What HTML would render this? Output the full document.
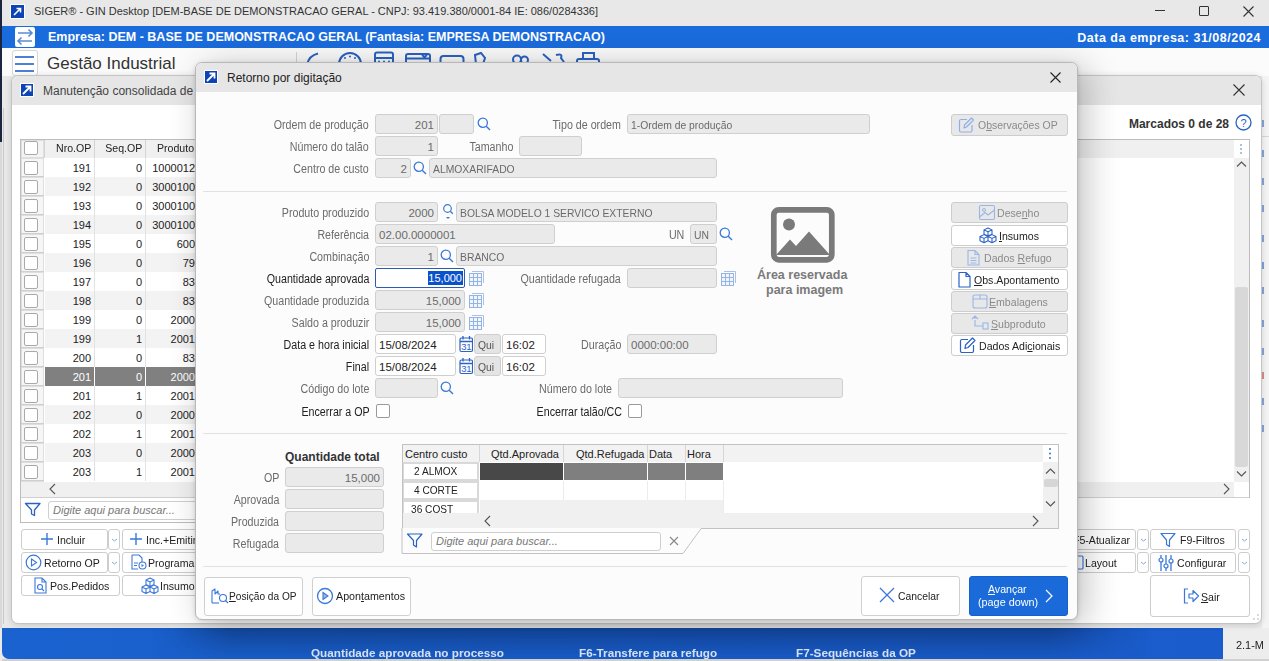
<!DOCTYPE html>
<html><head><meta charset="utf-8"><style>
*{box-sizing:border-box;margin:0;padding:0}
html,body{width:1269px;height:661px;overflow:hidden;background:#e9e9e9;font-family:"Liberation Sans",sans-serif;font-size:11px;color:#222}
.a{position:absolute}
.t{position:absolute;white-space:nowrap;line-height:13px}
.inp{position:absolute;background:#eaeaea;border:1px solid #cfcfcf;border-radius:3px;font-size:11px;color:#6a6a6a;line-height:18px;padding:0 4px;white-space:nowrap;overflow:hidden}
.btn{position:absolute;background:#fff;border:1px solid #cdcdcd;border-radius:3px;white-space:nowrap;overflow:hidden}
.dis{background:#e8e8e8;color:#8a8a8a}
u{text-decoration:underline;text-underline-offset:1px}
</style></head><body>
<div class="a" style="left:0px;top:0px;width:1269px;height:661px;background:#e9e9e9"></div>
<div class="a" style="left:0px;top:0px;width:2px;height:142px;background:#1b2540"></div>
<div class="a" style="left:0px;top:142px;width:2px;height:486px;background:#d9d9d9"></div>
<div class="a" style="left:2px;top:0px;width:1267px;height:26px;background:#e8e8e8"></div>
<div class="a" style="left:10px;top:4px;width:15px;height:15px;background:#0c45b3;border:1px solid #fff"></div>
<svg class="a" style="left:10px;top:4px;" width="15" height="15" viewBox="0 0 15 15"><path d="M4 11 L10.5 4.5 M6.5 4.5 H10.5 V8.5" stroke="#fff" stroke-width="1.6" fill="none"/></svg>
<div class="t" style="left:34px;top:5px;font-size:11px;color:#333;font-weight:normal;">SIGER® - GIN Desktop [DEM-BASE DE DEMONSTRACAO GERAL - CNPJ: 93.419.380/0001-84 IE: 086/0284336]</div>
<div class="a" style="left:1155px;top:10px;width:10px;height:1px;background:#333"></div>
<div class="a" style="left:1199px;top:6px;width:10px;height:10px;border:1px solid #333;border-radius:1px"></div>
<svg class="a" style="left:1243px;top:6px;" width="11" height="11" viewBox="0 0 11 11"><path d="M0.5 0.5 L10.5 10.5 M10.5 0.5 L0.5 10.5" stroke="#333" stroke-width="1.1"/></svg>
<div class="a" style="left:2px;top:26px;width:1267px;height:22px;background:#1a6bdc"></div>
<div class="a" style="left:15px;top:27px;width:20px;height:20px;background:#fff;border-radius:2px"></div>
<svg class="a" style="left:15px;top:27px;" width="20" height="20" viewBox="0 0 20 20"><path d="M3 6 H17 M13.5 2.5 L17 6 L13.5 9.5 M17 14 H3 M6.5 10.5 L3 14 L6.5 17.5" stroke="#5b8ad8" stroke-width="1.6" fill="none"/></svg>
<div class="t" style="left:48px;top:31px;font-size:12.5px;color:#fff;font-weight:bold;">Empresa: DEM - BASE DE DEMONSTRACAO GERAL (Fantasia: EMPRESA DEMONSTRACAO)</div>
<div class="t" style="right:8px;top:32px;font-size:12.5px;color:#fff;font-weight:bold;letter-spacing:0.5px">Data da empresa: 31/08/2024</div>
<div class="a" style="left:2px;top:48px;width:1267px;height:28px;background:#fbfbfb"></div>
<div class="a" style="left:12px;top:50px;width:26px;height:26px;background:#fff;border:1px solid #d6d6d6;border-radius:3px"></div>
<div class="a" style="left:15px;top:56px;width:19px;height:2px;background:#4f80d4"></div>
<div class="a" style="left:15px;top:63px;width:19px;height:2px;background:#4f80d4"></div>
<div class="a" style="left:15px;top:70px;width:19px;height:2px;background:#4f80d4"></div>
<div class="t" style="left:47px;top:55px;font-size:17px;color:#333;font-weight:normal;line-height:18px">Gestão Industrial</div>
<div class="a" style="left:296px;top:52px;width:1px;height:10px;background:#d6d6d6"></div>
<svg class="a" style="left:300px;top:48px;" width="320" height="16" viewBox="0 0 320 16"><path d="M18 5.5 Q8 8 7 18" style="stroke:#2a63c4;stroke-width:2;fill:none"/><circle cx="50" cy="16" r="11" style="stroke:#2a63c4;stroke-width:2;fill:none"/><circle cx="45" cy="10" r="1" fill="#2a63c4"/><circle cx="50" cy="8.5" r="1" fill="#2a63c4"/><circle cx="55" cy="10" r="1" fill="#2a63c4"/><rect x="75" y="4.5" width="18" height="16" rx="2" style="stroke:#2a63c4;stroke-width:2;fill:none"/><path d="M76 10 H92" style="stroke:#2a63c4;stroke-width:2;fill:none"/><circle cx="79" cy="13.5" r="1" fill="#2a63c4"/><circle cx="84" cy="13.5" r="1" fill="#2a63c4"/><circle cx="89" cy="13.5" r="1" fill="#2a63c4"/><rect x="106" y="6" width="24" height="14" rx="2" style="stroke:#2a63c4;stroke-width:2;fill:none"/><path d="M107 10.5 H129 M122 7 L124.5 9 L127 7" style="stroke:#2a63c4;stroke-width:2;fill:none"/><rect x="140.5" y="8" width="23" height="12" rx="3" style="stroke:#2a63c4;stroke-width:2;fill:none"/><path d="M176 16 L175 7 L181 5 L185 10 L183 16" style="stroke:#2a63c4;stroke-width:2;fill:none"/><circle cx="217" cy="11.5" r="4" style="stroke:#2a63c4;stroke-width:2;fill:none"/><circle cx="224.5" cy="12" r="3.5" style="stroke:#2a63c4;stroke-width:2;fill:none"/><path d="M243 6 L251 13 M256 7 Q263 5 261 10 L264 14" style="stroke:#2a63c4;stroke-width:2;fill:none"/><rect x="277" y="11" width="22" height="10" rx="2" style="stroke:#2a63c4;stroke-width:2;fill:none"/><rect x="283" y="5" width="11" height="6" style="stroke:#2a63c4;stroke-width:2;fill:none"/></svg>
<div class="a" style="left:1262px;top:76px;width:7px;height:552px;background:#f4f4f4"></div>
<div class="a" style="left:1262px;top:120px;width:2px;height:7px;background:#2a63c4;opacity:.55"></div>
<div class="a" style="left:1262px;top:150px;width:2px;height:7px;background:#2a63c4;opacity:.55"></div>
<div class="a" style="left:1262px;top:178px;width:2px;height:7px;background:#2a63c4;opacity:.55"></div>
<div class="a" style="left:1262px;top:205px;width:2px;height:7px;background:#2a63c4;opacity:.55"></div>
<div class="a" style="left:1262px;top:235px;width:2px;height:7px;background:#2a63c4;opacity:.55"></div>
<div class="a" style="left:1262px;top:262px;width:2px;height:7px;background:#1a5fd0;opacity:.55"></div>
<div class="a" style="left:1262px;top:287px;width:2px;height:7px;background:#2a63c4;opacity:.55"></div>
<div class="a" style="left:1262px;top:320px;width:2px;height:7px;background:#2a63c4;opacity:.55"></div>
<div class="a" style="left:1262px;top:348px;width:2px;height:7px;background:#2a63c4;opacity:.55"></div>
<div class="a" style="left:1262px;top:372px;width:2px;height:7px;background:#c0392b;opacity:.55"></div>
<div class="a" style="left:1262px;top:398px;width:2px;height:7px;background:#2a63c4;opacity:.55"></div>
<div class="a" style="left:1262px;top:425px;width:2px;height:7px;background:#2a63c4;opacity:.55"></div>
<div class="a" style="left:2px;top:628px;width:1221px;height:31px;background:linear-gradient(90deg,#1a62cf 0%,#1a5fcc 40%,#1a5ccb 100%);border-bottom-left-radius:7px"></div>
<div class="a" style="left:150px;top:628px;width:1000px;height:31px;background:linear-gradient(180deg,rgba(0,10,40,.26),rgba(0,10,40,.04));-webkit-mask-image:linear-gradient(90deg,transparent,#000 80px,#000 900px,transparent)"></div>
<div class="a" style="left:1223px;top:628px;width:46px;height:33px;background:#ededed"></div>
<div class="t" style="left:1236px;top:639px;font-size:11.5px;color:#222;font-weight:normal;transform:scaleX(0.95);transform-origin:0 0;">2.1-M</div>
<div class="a" style="left:2px;top:659px;width:1267px;height:2px;background:#d0d0d0"></div>
<div class="t" style="left:311px;top:647px;font-size:11.5px;color:#d6e2f4;font-weight:bold;transform:scaleX(1.02);transform-origin:0 0;">Quantidade aprovada no processo</div>
<div class="t" style="left:579px;top:647px;font-size:11.5px;color:#d6e2f4;font-weight:bold;transform:scaleX(1.02);transform-origin:0 0;">F6-Transfere para refugo</div>
<div class="t" style="left:796px;top:647px;font-size:11.5px;color:#d6e2f4;font-weight:bold;transform:scaleX(1.02);transform-origin:0 0;">F7-Sequências da OP</div>
<div class="a" style="left:3px;top:108px;width:1px;height:516px;background:#c8c8c8"></div>
<div class="a" style="left:1262px;top:136px;width:7px;height:1px;background:#d6d6d6"></div>
<div class="a" style="left:11px;top:75px;width:1251px;height:549px;background:#fff;border:1px solid #c4c4c4;border-radius:7px;box-shadow:0 1px 6px rgba(0,0,0,.15);overflow:hidden">
<div class="a" style="left:0;top:0;width:1251px;height:29px;background:#e6e6e6"></div>
</div>
<div class="a" style="left:20px;top:83px;width:14px;height:14px;background:#0c45b3;border:1px solid #fff"></div>
<svg class="a" style="left:20px;top:83px;" width="14" height="14" viewBox="0 0 14 14"><path d="M3 11 L10.5 3.5 M5.5 3.5 H10.5 V8.5" stroke="#fff" stroke-width="1.8" fill="none"/></svg>
<div class="t" style="left:43px;top:85px;font-size:12px;color:#444;font-weight:normal;">Manutenção consolidada de OPs</div>
<svg class="a" style="left:1233px;top:84px;" width="12" height="12" viewBox="0 0 12 12"><path d="M0.5 0.5 L11.5 11.5 M11.5 0.5 L0.5 11.5" stroke="#333" stroke-width="1.1"/></svg>
<div class="t" style="right:40px;top:118px;font-size:12px;color:#333;font-weight:bold;">Marcados 0 de 28</div>
<svg class="a" style="left:1235px;top:114px;" width="17" height="17" viewBox="0 0 17 17"><circle cx="8.5" cy="8.5" r="7.5" stroke="#2a63c4" stroke-width="1.3" fill="none"/><text x="8.5" y="12.5" text-anchor="middle" font-family="Liberation Sans" font-size="11" fill="#2a63c4">?</text></svg>
<div class="a" style="left:20px;top:139px;width:1230px;height:359px;border:1px solid #bdbdbd;background:#fff"></div>
<div class="a" style="left:20px;top:497px;width:1px;height:26px;background:#bdbdbd"></div>
<div class="a" style="left:20px;top:522px;width:180px;height:1px;background:#bdbdbd"></div>
<div class="a" style="left:21px;top:140px;width:1213px;height:18px;background:#f0f0f0"></div>
<div class="a" style="left:21px;top:140px;width:23px;height:342px;background:#dedede"></div>
<div class="a" style="left:22px;top:141px;width:21px;height:16px;background:#f3f3f3"></div>
<div class="a" style="left:24px;top:141px;width:14px;height:14px;background:#fff;border:1px solid #aaa;border-radius:2px"></div>
<div class="a" style="left:44px;top:140px;width:1px;height:18px;background:#d4d4d4"></div>
<div class="a" style="left:94px;top:140px;width:1px;height:18px;background:#d4d4d4"></div>
<div class="a" style="left:145px;top:140px;width:1px;height:18px;background:#d4d4d4"></div>
<div class="t" style="right:1178px;top:142px;font-size:11.5px;color:#222;font-weight:normal;transform:scaleX(0.92);transform-origin:100% 0;">Nro.OP</div>
<div class="t" style="right:1127px;top:142px;font-size:11.5px;color:#222;font-weight:normal;transform:scaleX(0.92);transform-origin:100% 0;">Seq.OP</div>
<div class="t" style="left:157px;top:142px;font-size:11.5px;color:#222;font-weight:normal;transform:scaleX(0.92);transform-origin:0 0;">Produto</div>
<div class="a" style="left:45px;top:158px;width:955px;height:19px;background:#fff"></div>
<div class="a" style="left:22px;top:159px;width:21px;height:17px;background:#f6f6f6"></div>
<div class="a" style="left:24px;top:161px;width:14px;height:14px;background:#fff;border:1px solid #a9a9a9;border-radius:2px"></div>
<div class="a" style="left:94px;top:158px;width:1px;height:19px;background:#e2e2e2"></div>
<div class="a" style="left:145px;top:158px;width:1px;height:19px;background:#e2e2e2"></div>
<div class="t" style="right:1178px;top:162px;font-size:11px;color:#222;font-weight:normal;">191</div>
<div class="t" style="right:1127px;top:162px;font-size:11px;color:#222;font-weight:normal;">0</div>
<div class="t" style="right:1074px;top:162px;font-size:11px;color:#222;font-weight:normal;">1000012</div>
<div class="a" style="left:21px;top:176px;width:23px;height:1px;background:#cfcfcf"></div>
<div class="a" style="left:45px;top:177px;width:955px;height:19px;background:#f3f3f3"></div>
<div class="a" style="left:22px;top:178px;width:21px;height:17px;background:#f6f6f6"></div>
<div class="a" style="left:24px;top:180px;width:14px;height:14px;background:#fff;border:1px solid #a9a9a9;border-radius:2px"></div>
<div class="a" style="left:94px;top:177px;width:1px;height:19px;background:#e2e2e2"></div>
<div class="a" style="left:145px;top:177px;width:1px;height:19px;background:#e2e2e2"></div>
<div class="t" style="right:1178px;top:181px;font-size:11px;color:#222;font-weight:normal;">192</div>
<div class="t" style="right:1127px;top:181px;font-size:11px;color:#222;font-weight:normal;">0</div>
<div class="t" style="right:1074px;top:181px;font-size:11px;color:#222;font-weight:normal;">3000100</div>
<div class="a" style="left:21px;top:195px;width:23px;height:1px;background:#cfcfcf"></div>
<div class="a" style="left:45px;top:196px;width:955px;height:19px;background:#fff"></div>
<div class="a" style="left:22px;top:197px;width:21px;height:17px;background:#f6f6f6"></div>
<div class="a" style="left:24px;top:199px;width:14px;height:14px;background:#fff;border:1px solid #a9a9a9;border-radius:2px"></div>
<div class="a" style="left:94px;top:196px;width:1px;height:19px;background:#e2e2e2"></div>
<div class="a" style="left:145px;top:196px;width:1px;height:19px;background:#e2e2e2"></div>
<div class="t" style="right:1178px;top:200px;font-size:11px;color:#222;font-weight:normal;">193</div>
<div class="t" style="right:1127px;top:200px;font-size:11px;color:#222;font-weight:normal;">0</div>
<div class="t" style="right:1074px;top:200px;font-size:11px;color:#222;font-weight:normal;">3000100</div>
<div class="a" style="left:21px;top:214px;width:23px;height:1px;background:#cfcfcf"></div>
<div class="a" style="left:45px;top:215px;width:955px;height:19px;background:#f3f3f3"></div>
<div class="a" style="left:22px;top:216px;width:21px;height:17px;background:#f6f6f6"></div>
<div class="a" style="left:24px;top:218px;width:14px;height:14px;background:#fff;border:1px solid #a9a9a9;border-radius:2px"></div>
<div class="a" style="left:94px;top:215px;width:1px;height:19px;background:#e2e2e2"></div>
<div class="a" style="left:145px;top:215px;width:1px;height:19px;background:#e2e2e2"></div>
<div class="t" style="right:1178px;top:219px;font-size:11px;color:#222;font-weight:normal;">194</div>
<div class="t" style="right:1127px;top:219px;font-size:11px;color:#222;font-weight:normal;">0</div>
<div class="t" style="right:1074px;top:219px;font-size:11px;color:#222;font-weight:normal;">3000100</div>
<div class="a" style="left:21px;top:233px;width:23px;height:1px;background:#cfcfcf"></div>
<div class="a" style="left:45px;top:234px;width:955px;height:19px;background:#fff"></div>
<div class="a" style="left:22px;top:235px;width:21px;height:17px;background:#f6f6f6"></div>
<div class="a" style="left:24px;top:237px;width:14px;height:14px;background:#fff;border:1px solid #a9a9a9;border-radius:2px"></div>
<div class="a" style="left:94px;top:234px;width:1px;height:19px;background:#e2e2e2"></div>
<div class="a" style="left:145px;top:234px;width:1px;height:19px;background:#e2e2e2"></div>
<div class="t" style="right:1178px;top:238px;font-size:11px;color:#222;font-weight:normal;">195</div>
<div class="t" style="right:1127px;top:238px;font-size:11px;color:#222;font-weight:normal;">0</div>
<div class="t" style="right:1074px;top:238px;font-size:11px;color:#222;font-weight:normal;">600</div>
<div class="a" style="left:21px;top:252px;width:23px;height:1px;background:#cfcfcf"></div>
<div class="a" style="left:45px;top:253px;width:955px;height:19px;background:#f3f3f3"></div>
<div class="a" style="left:22px;top:254px;width:21px;height:17px;background:#f6f6f6"></div>
<div class="a" style="left:24px;top:256px;width:14px;height:14px;background:#fff;border:1px solid #a9a9a9;border-radius:2px"></div>
<div class="a" style="left:94px;top:253px;width:1px;height:19px;background:#e2e2e2"></div>
<div class="a" style="left:145px;top:253px;width:1px;height:19px;background:#e2e2e2"></div>
<div class="t" style="right:1178px;top:257px;font-size:11px;color:#222;font-weight:normal;">196</div>
<div class="t" style="right:1127px;top:257px;font-size:11px;color:#222;font-weight:normal;">0</div>
<div class="t" style="right:1074px;top:257px;font-size:11px;color:#222;font-weight:normal;">79</div>
<div class="a" style="left:21px;top:271px;width:23px;height:1px;background:#cfcfcf"></div>
<div class="a" style="left:45px;top:272px;width:955px;height:19px;background:#fff"></div>
<div class="a" style="left:22px;top:273px;width:21px;height:17px;background:#f6f6f6"></div>
<div class="a" style="left:24px;top:275px;width:14px;height:14px;background:#fff;border:1px solid #a9a9a9;border-radius:2px"></div>
<div class="a" style="left:94px;top:272px;width:1px;height:19px;background:#e2e2e2"></div>
<div class="a" style="left:145px;top:272px;width:1px;height:19px;background:#e2e2e2"></div>
<div class="t" style="right:1178px;top:276px;font-size:11px;color:#222;font-weight:normal;">197</div>
<div class="t" style="right:1127px;top:276px;font-size:11px;color:#222;font-weight:normal;">0</div>
<div class="t" style="right:1074px;top:276px;font-size:11px;color:#222;font-weight:normal;">83</div>
<div class="a" style="left:21px;top:290px;width:23px;height:1px;background:#cfcfcf"></div>
<div class="a" style="left:45px;top:291px;width:955px;height:19px;background:#f3f3f3"></div>
<div class="a" style="left:22px;top:292px;width:21px;height:17px;background:#f6f6f6"></div>
<div class="a" style="left:24px;top:294px;width:14px;height:14px;background:#fff;border:1px solid #a9a9a9;border-radius:2px"></div>
<div class="a" style="left:94px;top:291px;width:1px;height:19px;background:#e2e2e2"></div>
<div class="a" style="left:145px;top:291px;width:1px;height:19px;background:#e2e2e2"></div>
<div class="t" style="right:1178px;top:295px;font-size:11px;color:#222;font-weight:normal;">198</div>
<div class="t" style="right:1127px;top:295px;font-size:11px;color:#222;font-weight:normal;">0</div>
<div class="t" style="right:1074px;top:295px;font-size:11px;color:#222;font-weight:normal;">83</div>
<div class="a" style="left:21px;top:309px;width:23px;height:1px;background:#cfcfcf"></div>
<div class="a" style="left:45px;top:310px;width:955px;height:19px;background:#fff"></div>
<div class="a" style="left:22px;top:311px;width:21px;height:17px;background:#f6f6f6"></div>
<div class="a" style="left:24px;top:313px;width:14px;height:14px;background:#fff;border:1px solid #a9a9a9;border-radius:2px"></div>
<div class="a" style="left:94px;top:310px;width:1px;height:19px;background:#e2e2e2"></div>
<div class="a" style="left:145px;top:310px;width:1px;height:19px;background:#e2e2e2"></div>
<div class="t" style="right:1178px;top:314px;font-size:11px;color:#222;font-weight:normal;">199</div>
<div class="t" style="right:1127px;top:314px;font-size:11px;color:#222;font-weight:normal;">0</div>
<div class="t" style="right:1074px;top:314px;font-size:11px;color:#222;font-weight:normal;">2000</div>
<div class="a" style="left:21px;top:328px;width:23px;height:1px;background:#cfcfcf"></div>
<div class="a" style="left:45px;top:329px;width:955px;height:19px;background:#f3f3f3"></div>
<div class="a" style="left:22px;top:330px;width:21px;height:17px;background:#f6f6f6"></div>
<div class="a" style="left:24px;top:332px;width:14px;height:14px;background:#fff;border:1px solid #a9a9a9;border-radius:2px"></div>
<div class="a" style="left:94px;top:329px;width:1px;height:19px;background:#e2e2e2"></div>
<div class="a" style="left:145px;top:329px;width:1px;height:19px;background:#e2e2e2"></div>
<div class="t" style="right:1178px;top:333px;font-size:11px;color:#222;font-weight:normal;">199</div>
<div class="t" style="right:1127px;top:333px;font-size:11px;color:#222;font-weight:normal;">1</div>
<div class="t" style="right:1074px;top:333px;font-size:11px;color:#222;font-weight:normal;">2001</div>
<div class="a" style="left:21px;top:347px;width:23px;height:1px;background:#cfcfcf"></div>
<div class="a" style="left:45px;top:348px;width:955px;height:19px;background:#fff"></div>
<div class="a" style="left:22px;top:349px;width:21px;height:17px;background:#f6f6f6"></div>
<div class="a" style="left:24px;top:351px;width:14px;height:14px;background:#fff;border:1px solid #a9a9a9;border-radius:2px"></div>
<div class="a" style="left:94px;top:348px;width:1px;height:19px;background:#e2e2e2"></div>
<div class="a" style="left:145px;top:348px;width:1px;height:19px;background:#e2e2e2"></div>
<div class="t" style="right:1178px;top:352px;font-size:11px;color:#222;font-weight:normal;">200</div>
<div class="t" style="right:1127px;top:352px;font-size:11px;color:#222;font-weight:normal;">0</div>
<div class="t" style="right:1074px;top:352px;font-size:11px;color:#222;font-weight:normal;">83</div>
<div class="a" style="left:21px;top:366px;width:23px;height:1px;background:#cfcfcf"></div>
<div class="a" style="left:45px;top:367px;width:955px;height:19px;background:#808080"></div>
<div class="a" style="left:22px;top:368px;width:21px;height:17px;background:#f6f6f6"></div>
<div class="a" style="left:24px;top:370px;width:14px;height:14px;background:#fff;border:1px solid #a9a9a9;border-radius:2px"></div>
<div class="a" style="left:94px;top:367px;width:1px;height:19px;background:#fff"></div>
<div class="a" style="left:145px;top:367px;width:1px;height:19px;background:#fff"></div>
<div class="t" style="right:1178px;top:371px;font-size:11px;color:#fff;font-weight:normal;">201</div>
<div class="t" style="right:1127px;top:371px;font-size:11px;color:#fff;font-weight:normal;">0</div>
<div class="t" style="right:1074px;top:371px;font-size:11px;color:#fff;font-weight:normal;">2000</div>
<div class="a" style="left:21px;top:385px;width:23px;height:1px;background:#cfcfcf"></div>
<div class="a" style="left:45px;top:386px;width:955px;height:19px;background:#fff"></div>
<div class="a" style="left:22px;top:387px;width:21px;height:17px;background:#f6f6f6"></div>
<div class="a" style="left:24px;top:389px;width:14px;height:14px;background:#fff;border:1px solid #a9a9a9;border-radius:2px"></div>
<div class="a" style="left:94px;top:386px;width:1px;height:19px;background:#e2e2e2"></div>
<div class="a" style="left:145px;top:386px;width:1px;height:19px;background:#e2e2e2"></div>
<div class="t" style="right:1178px;top:390px;font-size:11px;color:#222;font-weight:normal;">201</div>
<div class="t" style="right:1127px;top:390px;font-size:11px;color:#222;font-weight:normal;">1</div>
<div class="t" style="right:1074px;top:390px;font-size:11px;color:#222;font-weight:normal;">2001</div>
<div class="a" style="left:21px;top:404px;width:23px;height:1px;background:#cfcfcf"></div>
<div class="a" style="left:45px;top:405px;width:955px;height:19px;background:#f3f3f3"></div>
<div class="a" style="left:22px;top:406px;width:21px;height:17px;background:#f6f6f6"></div>
<div class="a" style="left:24px;top:408px;width:14px;height:14px;background:#fff;border:1px solid #a9a9a9;border-radius:2px"></div>
<div class="a" style="left:94px;top:405px;width:1px;height:19px;background:#e2e2e2"></div>
<div class="a" style="left:145px;top:405px;width:1px;height:19px;background:#e2e2e2"></div>
<div class="t" style="right:1178px;top:409px;font-size:11px;color:#222;font-weight:normal;">202</div>
<div class="t" style="right:1127px;top:409px;font-size:11px;color:#222;font-weight:normal;">0</div>
<div class="t" style="right:1074px;top:409px;font-size:11px;color:#222;font-weight:normal;">2000</div>
<div class="a" style="left:21px;top:423px;width:23px;height:1px;background:#cfcfcf"></div>
<div class="a" style="left:45px;top:424px;width:955px;height:19px;background:#fff"></div>
<div class="a" style="left:22px;top:425px;width:21px;height:17px;background:#f6f6f6"></div>
<div class="a" style="left:24px;top:427px;width:14px;height:14px;background:#fff;border:1px solid #a9a9a9;border-radius:2px"></div>
<div class="a" style="left:94px;top:424px;width:1px;height:19px;background:#e2e2e2"></div>
<div class="a" style="left:145px;top:424px;width:1px;height:19px;background:#e2e2e2"></div>
<div class="t" style="right:1178px;top:428px;font-size:11px;color:#222;font-weight:normal;">202</div>
<div class="t" style="right:1127px;top:428px;font-size:11px;color:#222;font-weight:normal;">1</div>
<div class="t" style="right:1074px;top:428px;font-size:11px;color:#222;font-weight:normal;">2001</div>
<div class="a" style="left:21px;top:442px;width:23px;height:1px;background:#cfcfcf"></div>
<div class="a" style="left:45px;top:443px;width:955px;height:19px;background:#f3f3f3"></div>
<div class="a" style="left:22px;top:444px;width:21px;height:17px;background:#f6f6f6"></div>
<div class="a" style="left:24px;top:446px;width:14px;height:14px;background:#fff;border:1px solid #a9a9a9;border-radius:2px"></div>
<div class="a" style="left:94px;top:443px;width:1px;height:19px;background:#e2e2e2"></div>
<div class="a" style="left:145px;top:443px;width:1px;height:19px;background:#e2e2e2"></div>
<div class="t" style="right:1178px;top:447px;font-size:11px;color:#222;font-weight:normal;">203</div>
<div class="t" style="right:1127px;top:447px;font-size:11px;color:#222;font-weight:normal;">0</div>
<div class="t" style="right:1074px;top:447px;font-size:11px;color:#222;font-weight:normal;">2000</div>
<div class="a" style="left:21px;top:461px;width:23px;height:1px;background:#cfcfcf"></div>
<div class="a" style="left:45px;top:462px;width:955px;height:19px;background:#fff"></div>
<div class="a" style="left:22px;top:463px;width:21px;height:17px;background:#f6f6f6"></div>
<div class="a" style="left:24px;top:465px;width:14px;height:14px;background:#fff;border:1px solid #a9a9a9;border-radius:2px"></div>
<div class="a" style="left:94px;top:462px;width:1px;height:19px;background:#e2e2e2"></div>
<div class="a" style="left:145px;top:462px;width:1px;height:19px;background:#e2e2e2"></div>
<div class="t" style="right:1178px;top:466px;font-size:11px;color:#222;font-weight:normal;">203</div>
<div class="t" style="right:1127px;top:466px;font-size:11px;color:#222;font-weight:normal;">1</div>
<div class="t" style="right:1074px;top:466px;font-size:11px;color:#222;font-weight:normal;">2001</div>
<div class="a" style="left:21px;top:480px;width:23px;height:1px;background:#cfcfcf"></div>
<div class="a" style="left:21px;top:482px;width:1213px;height:15px;background:#f0f0f0"></div>
<svg class="a" style="left:48px;top:483px;" width="10" height="12" viewBox="0 0 10 12"><path d="M7 1 L2 6 L7 11" stroke="#555" stroke-width="1.1" fill="none"/></svg>
<svg class="a" style="left:1221px;top:483px;" width="10" height="12" viewBox="0 0 10 12"><path d="M3 1 L8 6 L3 11" stroke="#555" stroke-width="1.1" fill="none"/></svg>
<div class="a" style="left:1234px;top:140px;width:15px;height:342px;background:#f0f0f0"></div>
<div class="a" style="left:1234px;top:140px;width:15px;height:18px;background:#fff"></div>
<svg class="a" style="left:1236px;top:143px;" width="10" height="14" viewBox="0 0 10 14"><circle cx="5" cy="2" r=".8" fill="#4a70b8"/><circle cx="5" cy="6" r=".8" fill="#4a70b8"/><circle cx="5" cy="10" r=".8" fill="#4a70b8"/></svg>
<svg class="a" style="left:1236px;top:160px;" width="11" height="8" viewBox="0 0 11 8"><path d="M1 6.5 L5.5 2 L10 6.5" stroke="#555" stroke-width="1.1" fill="none"/></svg>
<div class="a" style="left:1235px;top:287px;width:13px;height:180px;background:#d8d8d8;border-radius:2px"></div>
<svg class="a" style="left:1236px;top:470px;" width="11" height="8" viewBox="0 0 11 8"><path d="M1 1.5 L5.5 6 L10 1.5" stroke="#555" stroke-width="1.1" fill="none"/></svg>
<div class="a" style="left:21px;top:497px;width:1228px;height:1px;background:#d0d0d0"></div>
<svg class="a" style="left:24px;top:502px;" width="18" height="15" viewBox="0 0 18 15"><path d="M1.5 1.5 H16 L10.5 8 V13.5 L7.5 12 V8 Z" stroke="#2a63c4" stroke-width="1.3" fill="none" stroke-linejoin="round"/></svg>
<div class="a" style="left:48px;top:501px;width:400px;height:19px;background:#fff;border:1px solid #cfcfcf;border-radius:3px"></div>
<div class="t" style="left:53px;top:504px;font-size:11px;color:#777;font-weight:normal;font-style:italic">Digite aqui para buscar...</div>
<div class="btn" style="left:21px;top:529px;width:87px;height:21px;background:#fff"></div>
<div class="t" style="left:57px;top:534px;font-size:11.5px;color:#222;font-weight:normal;transform:scaleX(0.92);transform-origin:0 0;">Incluir</div>
<svg class="a" style="left:40px;top:532px;" width="14" height="14" viewBox="0 0 14 14"><path d="M7 1 V13 M1 7 H13" stroke="#3b78d8" stroke-width="1.4"/></svg>
<div class="btn" style="left:108px;top:529px;width:12px;height:21px"></div>
<svg class="a" style="left:111px;top:538px;" width="7" height="5" viewBox="0 0 7 5"><path d="M1 1 L3.5 3 L6 1" stroke="#8aa5d0" stroke-width="1" fill="none"/></svg>
<div class="btn" style="left:122px;top:529px;width:200px;height:21px;background:#fff"></div>
<div class="t" style="left:146px;top:534px;font-size:11.5px;color:#222;font-weight:normal;transform:scaleX(0.92);transform-origin:0 0;">Inc.+Emitir</div>
<svg class="a" style="left:129px;top:532px;" width="14" height="14" viewBox="0 0 14 14"><path d="M7 1 V13 M1 7 H13" stroke="#3b78d8" stroke-width="1.4"/></svg>
<div class="btn" style="left:21px;top:552px;width:87px;height:21px;background:#fff"></div>
<div class="t" style="left:44px;top:557px;font-size:11.5px;color:#222;font-weight:normal;transform:scaleX(0.92);transform-origin:0 0;">Retorno OP</div>
<svg class="a" style="left:25px;top:554px;" width="17" height="17" viewBox="0 0 17 17"><circle cx="8.5" cy="8.5" r="7.3" stroke="#3b78d8" stroke-width="1.2" fill="none"/><path d="M6.5 5 L11.5 8.5 L6.5 12 Z" stroke="#3b78d8" stroke-width="1.1" fill="none"/></svg>
<div class="btn" style="left:108px;top:552px;width:12px;height:21px"></div>
<svg class="a" style="left:111px;top:561px;" width="7" height="5" viewBox="0 0 7 5"><path d="M1 1 L3.5 3 L6 1" stroke="#8aa5d0" stroke-width="1" fill="none"/></svg>
<div class="btn" style="left:122px;top:552px;width:200px;height:21px;background:#fff"></div>
<div class="t" style="left:148px;top:557px;font-size:11.5px;color:#222;font-weight:normal;transform:scaleX(0.92);transform-origin:0 0;">Programar</div>
<svg class="a" style="left:130px;top:554px;" width="17" height="16" viewBox="0 0 17 16"><path d="M2 1 H9 L12 4 V8 M2 1 V15 H8" stroke="#3b78d8" stroke-width="1.1" fill="none"/><path d="M4 9 H8 M4 11.5 H7" stroke="#3b78d8" stroke-width="1"/><circle cx="12.5" cy="11.5" r="3.5" stroke="#3b78d8" stroke-width="1.1" fill="none"/><path d="M11.5 10 L14 11.5 L11.5 13 Z" fill="#3b78d8"/></svg>
<div class="btn" style="left:21px;top:575px;width:99px;height:21px;background:#fff"></div>
<div class="t" style="left:50px;top:580px;font-size:11.5px;color:#222;font-weight:normal;transform:scaleX(0.92);transform-origin:0 0;">Pos.Pedidos</div>
<svg class="a" style="left:33px;top:577px;" width="15" height="17" viewBox="0 0 15 17"><path d="M2 1 H9 L13 5 V16 H2 Z M9 1 V5 H13" stroke="#3b78d8" stroke-width="1.1" fill="none"/><circle cx="7" cy="10" r="2.5" stroke="#3b78d8" stroke-width="1.1" fill="none"/><path d="M9 12 L11 14" stroke="#3b78d8" stroke-width="1.1"/></svg>
<div class="btn" style="left:122px;top:575px;width:200px;height:21px;background:#fff"></div>
<div class="t" style="left:160px;top:580px;font-size:11.5px;color:#222;font-weight:normal;transform:scaleX(0.92);transform-origin:0 0;">Insumos</div>
<svg class="a" style="left:141px;top:577px;" width="18" height="18" viewBox="0 0 18 18"><path d="M9 1 L13 3 V7.5 L9 9.5 L5 7.5 V3 Z M5 3 L9 5 L13 3 M9 5 V9.5 M5 8 L9 10 V14.5 L5 16.5 L1 14.5 V10 Z M1 10 L5 12 L9 10 M5 12 V16.5 M13 8 L17 10 V14.5 L13 16.5 L9 14.5 V10 Z M9 10 L13 12 L17 10 M13 12 V16.5" stroke="#3b78d8" stroke-width="1.1" fill="none" stroke-linejoin="round"/></svg>
<div class="btn" style="left:1000px;top:529px;width:136px;height:21px;background:#fff"></div>
<div class="t" style="left:1073px;top:534px;font-size:11.5px;color:#222;font-weight:normal;transform:scaleX(0.92);transform-origin:0 0;">F5-Atualizar</div>
<div class="btn" style="left:1137px;top:529px;width:12px;height:21px"></div>
<svg class="a" style="left:1140px;top:538px;" width="7" height="5" viewBox="0 0 7 5"><path d="M1 1 L3.5 3 L6 1" stroke="#8aa5d0" stroke-width="1" fill="none"/></svg>
<div class="btn" style="left:1150px;top:529px;width:86px;height:21px;background:#fff"></div>
<div class="t" style="left:1180px;top:534px;font-size:11.5px;color:#222;font-weight:normal;transform:scaleX(0.92);transform-origin:0 0;">F9-Filtros</div>
<svg class="a" style="left:1160px;top:532px;" width="16" height="16" viewBox="0 0 16 16"><path d="M1 1.5 H15 L9.5 8 V14.5 L6.5 12.5 V8 Z" stroke="#3b78d8" stroke-width="1.2" fill="none" stroke-linejoin="round"/></svg>
<div class="btn" style="left:1238px;top:529px;width:12px;height:21px"></div>
<svg class="a" style="left:1241px;top:538px;" width="7" height="5" viewBox="0 0 7 5"><path d="M1 1 L3.5 3 L6 1" stroke="#8aa5d0" stroke-width="1" fill="none"/></svg>
<div class="btn" style="left:1000px;top:552px;width:136px;height:21px;background:#fff"></div>
<div class="t" style="left:1085px;top:557px;font-size:11.5px;color:#222;font-weight:normal;transform:scaleX(0.92);transform-origin:0 0;">Layout</div>
<svg class="a" style="left:1075px;top:555px;" width="9" height="15" viewBox="0 0 9 15"><rect x="1" y="1" width="7" height="13" rx="1" stroke="#3b78d8" stroke-width="1.2" fill="none"/></svg>
<div class="btn" style="left:1137px;top:552px;width:12px;height:21px"></div>
<svg class="a" style="left:1140px;top:561px;" width="7" height="5" viewBox="0 0 7 5"><path d="M1 1 L3.5 3 L6 1" stroke="#8aa5d0" stroke-width="1" fill="none"/></svg>
<div class="btn" style="left:1150px;top:552px;width:86px;height:21px;background:#fff"></div>
<div class="t" style="left:1177px;top:557px;font-size:11.5px;color:#222;font-weight:normal;transform:scaleX(0.92);transform-origin:0 0;">Configurar</div>
<svg class="a" style="left:1158px;top:554px;" width="16" height="18" viewBox="0 0 16 18"><path d="M3 1 V17 M8 1 V17 M13 1 V17" stroke="#3b78d8" stroke-width="1.3"/><circle cx="3" cy="6" r="2" fill="#fff" stroke="#3b78d8" stroke-width="1.2"/><circle cx="8" cy="12" r="2" fill="#fff" stroke="#3b78d8" stroke-width="1.2"/><circle cx="13" cy="7" r="2" fill="#fff" stroke="#3b78d8" stroke-width="1.2"/></svg>
<div class="btn" style="left:1238px;top:552px;width:12px;height:21px"></div>
<svg class="a" style="left:1241px;top:561px;" width="7" height="5" viewBox="0 0 7 5"><path d="M1 1 L3.5 3 L6 1" stroke="#8aa5d0" stroke-width="1" fill="none"/></svg>
<div class="btn" style="left:1150px;top:575px;width:100px;height:42px;background:#fff"></div>
<div class="t" style="left:1201px;top:591px;font-size:11.5px;color:#222;font-weight:normal;transform:scaleX(0.92);transform-origin:0 0;"><u>S</u>air</div>
<svg class="a" style="left:1182px;top:587px;" width="18" height="18" viewBox="0 0 18 18"><path d="M6 2 H2.5 V16 H6" stroke="#3b78d8" stroke-width="1.2" fill="none"/><path d="M7 7 H11 V3.5 L16.5 9 L11 14.5 V11 H7 Z" stroke="#3b78d8" stroke-width="1.2" fill="none" stroke-linejoin="round"/></svg>
<svg class="a" style="left:1252px;top:613px;" width="8" height="8" viewBox="0 0 8 8"><circle cx="6" cy="2" r=".8" fill="#aaa"/><circle cx="6" cy="6" r=".8" fill="#aaa"/><circle cx="2" cy="6" r=".8" fill="#aaa"/></svg>
<div class="a" style="left:195px;top:62px;width:883px;height:558px;background:#fcfcfc;border:1px solid #b8b8b8;border-radius:7px;box-shadow:8px 5px 34px rgba(0,0,0,.24),0 1px 5px rgba(0,0,0,.14);overflow:hidden">
<div class="a" style="left:0;top:0;width:883px;height:29px;background:#e6e6e6"></div>
</div>
<div class="a" style="left:204px;top:70px;width:14px;height:14px;background:#0c45b3;border:1px solid #fff"></div>
<svg class="a" style="left:204px;top:70px;" width="14" height="14" viewBox="0 0 14 14"><path d="M3 11 L10.5 3.5 M5.5 3.5 H10.5 V8.5" stroke="#fff" stroke-width="1.8" fill="none"/></svg>
<div class="t" style="left:227px;top:72px;font-size:12px;color:#222;font-weight:normal;">Retorno por digitação</div>
<svg class="a" style="left:1050px;top:72px;" width="11" height="11" viewBox="0 0 11 11"><path d="M0.5 0.5 L10.5 10.5 M10.5 0.5 L0.5 10.5" stroke="#222" stroke-width="1.1"/></svg>
<div class="t" style="right:900px;top:119px;font-size:12px;color:#6b6b6b;font-weight:normal;transform:scaleX(0.89);transform-origin:100% 0;">Ordem de produção</div>
<div class="inp" style="left:375px;top:114px;width:63px;height:20px;background:#eaeaea;border-color:#cfcfcf"></div>
<div class="t" style="right:835px;top:119px;font-size:11.5px;color:#6a6a6a;font-weight:normal;">201</div>
<div class="inp" style="left:439px;top:114px;width:35px;height:20px;background:#eaeaea;border-color:#cfcfcf"></div>
<svg class="a" style="left:477px;top:117px;" width="14" height="14" viewBox="0 0 14 14"><circle cx="5.8" cy="5.8" r="4.6" stroke="#3b78d8" stroke-width="1.3" fill="none"/><path d="M9.2 9.2 L13 13" stroke="#3b78d8" stroke-width="1.4"/></svg>
<div class="t" style="right:648px;top:119px;font-size:12px;color:#6b6b6b;font-weight:normal;transform:scaleX(0.89);transform-origin:100% 0;">Tipo de ordem</div>
<div class="inp" style="left:627px;top:114px;width:243px;height:20px;background:#eaeaea;border-color:#cfcfcf"></div>
<div class="t" style="left:631px;top:119px;font-size:11.5px;color:#6a6a6a;font-weight:normal;transform:scaleX(0.9);transform-origin:0 0;">1-Ordem de produção</div>
<div class="t" style="right:900px;top:141px;font-size:12px;color:#6b6b6b;font-weight:normal;transform:scaleX(0.89);transform-origin:100% 0;">Número do talão</div>
<div class="inp" style="left:375px;top:136px;width:63px;height:20px;background:#eaeaea;border-color:#cfcfcf"></div>
<div class="t" style="right:835px;top:141px;font-size:11.5px;color:#6a6a6a;font-weight:normal;">1</div>
<div class="t" style="right:756px;top:141px;font-size:12px;color:#6b6b6b;font-weight:normal;transform:scaleX(0.89);transform-origin:100% 0;">Tamanho</div>
<div class="inp" style="left:519px;top:136px;width:63px;height:20px;background:#eaeaea;border-color:#cfcfcf"></div>
<div class="t" style="right:900px;top:163px;font-size:12px;color:#6b6b6b;font-weight:normal;transform:scaleX(0.89);transform-origin:100% 0;">Centro de custo</div>
<div class="inp" style="left:375px;top:158px;width:36px;height:20px;background:#eaeaea;border-color:#cfcfcf"></div>
<div class="t" style="right:862px;top:163px;font-size:11.5px;color:#6a6a6a;font-weight:normal;">2</div>
<svg class="a" style="left:413px;top:161px;" width="14" height="14" viewBox="0 0 14 14"><circle cx="5.8" cy="5.8" r="4.6" stroke="#3b78d8" stroke-width="1.3" fill="none"/><path d="M9.2 9.2 L13 13" stroke="#3b78d8" stroke-width="1.4"/></svg>
<div class="inp" style="left:429px;top:158px;width:288px;height:20px;background:#eaeaea;border-color:#cfcfcf"></div>
<div class="t" style="left:433px;top:163px;font-size:11.5px;color:#6a6a6a;font-weight:normal;transform:scaleX(0.9);transform-origin:0 0;">ALMOXARIFADO</div>
<div class="btn dis" style="left:951px;top:114px;width:117px;height:22px"></div>
<svg class="a" style="left:958px;top:117px;" width="17" height="16" viewBox="0 0 17 16"><path d="M9 2.5 H3 A1.5 1.5 0 0 0 1.5 4 V13.5 A1.5 1.5 0 0 0 3 15 H12.5 A1.5 1.5 0 0 0 14 13.5 V8" stroke="#8fb0e6" stroke-width="1.2" fill="none"/><path d="M6 11 L6.5 8 L13.5 1 L15.5 3 L8.5 10 Z" stroke="#8fb0e6" stroke-width="1.2" fill="none" stroke-linejoin="round"/></svg>
<div class="t" style="left:978px;top:119px;font-size:11.5px;color:#8a8a8a;font-weight:normal;transform:scaleX(0.91);transform-origin:0 0;">O<u>b</u>servações OP</div>
<div class="a" style="left:203px;top:191px;width:864px;height:1px;background:#e2e2e2"></div>
<div class="t" style="right:900px;top:207px;font-size:12px;color:#6b6b6b;font-weight:normal;transform:scaleX(0.89);transform-origin:100% 0;">Produto produzido</div>
<div class="inp" style="left:375px;top:202px;width:63px;height:20px;background:#eaeaea;border-color:#cfcfcf"></div>
<div class="t" style="right:835px;top:207px;font-size:11.5px;color:#6a6a6a;font-weight:normal;">2000</div>
<svg class="a" style="left:441px;top:203px;" width="14" height="18" viewBox="0 0 14 18"><circle cx="6.5" cy="5.5" r="3.8" stroke="#3b78d8" stroke-width="1.2" fill="none"/><path d="M9.3 8.3 L11.8 10.8" stroke="#3b78d8" stroke-width="1.3"/><path d="M5 14 L7 16 L9 14 Z" fill="#3b78d8"/></svg>
<div class="inp" style="left:456px;top:202px;width:261px;height:20px;background:#eaeaea;border-color:#cfcfcf"></div>
<div class="t" style="left:460px;top:207px;font-size:11.5px;color:#6a6a6a;font-weight:normal;transform:scaleX(0.9);transform-origin:0 0;">BOLSA MODELO 1 SERVICO EXTERNO</div>
<div class="t" style="right:900px;top:229px;font-size:12px;color:#6b6b6b;font-weight:normal;transform:scaleX(0.89);transform-origin:100% 0;">Referência</div>
<div class="inp" style="left:375px;top:224px;width:180px;height:20px;background:#eaeaea;border-color:#cfcfcf"></div>
<div class="t" style="left:379px;top:229px;font-size:11.5px;color:#6a6a6a;font-weight:normal;">02.00.0000001</div>
<div class="t" style="right:585px;top:229px;font-size:12px;color:#6b6b6b;font-weight:normal;transform:scaleX(0.89);transform-origin:100% 0;">UN</div>
<div class="inp" style="left:690px;top:224px;width:27px;height:20px;background:#eaeaea;border-color:#cfcfcf"></div>
<div class="t" style="left:694px;top:229px;font-size:11.5px;color:#6a6a6a;font-weight:normal;transform:scaleX(0.9);transform-origin:0 0;">UN</div>
<svg class="a" style="left:719px;top:227px;" width="14" height="14" viewBox="0 0 14 14"><circle cx="5.8" cy="5.8" r="4.6" stroke="#3b78d8" stroke-width="1.3" fill="none"/><path d="M9.2 9.2 L13 13" stroke="#3b78d8" stroke-width="1.4"/></svg>
<div class="t" style="right:900px;top:251px;font-size:12px;color:#6b6b6b;font-weight:normal;transform:scaleX(0.89);transform-origin:100% 0;">Combinação</div>
<div class="inp" style="left:375px;top:246px;width:63px;height:20px;background:#eaeaea;border-color:#cfcfcf"></div>
<div class="t" style="right:835px;top:251px;font-size:11.5px;color:#6a6a6a;font-weight:normal;">1</div>
<svg class="a" style="left:440px;top:249px;" width="14" height="14" viewBox="0 0 14 14"><circle cx="5.8" cy="5.8" r="4.6" stroke="#3b78d8" stroke-width="1.3" fill="none"/><path d="M9.2 9.2 L13 13" stroke="#3b78d8" stroke-width="1.4"/></svg>
<div class="inp" style="left:456px;top:246px;width:261px;height:20px;background:#eaeaea;border-color:#cfcfcf"></div>
<div class="t" style="left:460px;top:251px;font-size:11.5px;color:#6a6a6a;font-weight:normal;transform:scaleX(0.9);transform-origin:0 0;">BRANCO</div>
<div class="t" style="right:900px;top:273px;font-size:12px;color:#222;font-weight:normal;transform:scaleX(0.89);transform-origin:100% 0;">Quantidade aprovada</div>
<div class="inp" style="left:375px;top:268px;width:90px;height:20px;background:#fff;border:1px solid #2c5bb0;border-radius:2px"></div>
<div class="a" style="left:428px;top:271px;width:35px;height:14px;background:#0a52cc"></div>
<div class="t" style="right:807px;top:272px;font-size:11px;color:#fff;font-weight:normal;">15,000</div>
<svg class="a" style="left:468px;top:270px;" width="17" height="17" viewBox="0 0 17 17"><path d="M4 1.5 H15.5 V13" stroke="#a9c0e8" stroke-width="1" fill="none"/><rect x="1.5" y="3.5" width="12" height="12" fill="#f1f5fc" stroke="#95b3e3" stroke-width="1"/><path d="M1.5 7.5 H13.5 M1.5 11.5 H13.5 M5.5 3.5 V15.5 M9.5 3.5 V15.5" stroke="#95b3e3" stroke-width="1" fill="none"/></svg>
<div class="t" style="right:648px;top:273px;font-size:12px;color:#6b6b6b;font-weight:normal;transform:scaleX(0.89);transform-origin:100% 0;">Quantidade refugada</div>
<div class="inp" style="left:627px;top:268px;width:90px;height:20px;background:#eaeaea;border-color:#cfcfcf"></div>
<svg class="a" style="left:720px;top:270px;" width="17" height="17" viewBox="0 0 17 17"><path d="M4 1.5 H15.5 V13" stroke="#a9c0e8" stroke-width="1" fill="none"/><rect x="1.5" y="3.5" width="12" height="12" fill="#f1f5fc" stroke="#95b3e3" stroke-width="1"/><path d="M1.5 7.5 H13.5 M1.5 11.5 H13.5 M5.5 3.5 V15.5 M9.5 3.5 V15.5" stroke="#95b3e3" stroke-width="1" fill="none"/></svg>
<div class="t" style="right:900px;top:295px;font-size:12px;color:#6b6b6b;font-weight:normal;transform:scaleX(0.89);transform-origin:100% 0;">Quantidade produzida</div>
<div class="inp" style="left:375px;top:290px;width:90px;height:20px;background:#eaeaea;border-color:#cfcfcf"></div>
<div class="t" style="right:808px;top:295px;font-size:11.5px;color:#6a6a6a;font-weight:normal;">15,000</div>
<svg class="a" style="left:468px;top:292px;" width="17" height="17" viewBox="0 0 17 17"><path d="M4 1.5 H15.5 V13" stroke="#a9c0e8" stroke-width="1" fill="none"/><rect x="1.5" y="3.5" width="12" height="12" fill="#f1f5fc" stroke="#95b3e3" stroke-width="1"/><path d="M1.5 7.5 H13.5 M1.5 11.5 H13.5 M5.5 3.5 V15.5 M9.5 3.5 V15.5" stroke="#95b3e3" stroke-width="1" fill="none"/></svg>
<div class="t" style="right:900px;top:317px;font-size:12px;color:#6b6b6b;font-weight:normal;transform:scaleX(0.89);transform-origin:100% 0;">Saldo a produzir</div>
<div class="inp" style="left:375px;top:312px;width:90px;height:20px;background:#eaeaea;border-color:#cfcfcf"></div>
<div class="t" style="right:808px;top:317px;font-size:11.5px;color:#6a6a6a;font-weight:normal;">15,000</div>
<svg class="a" style="left:468px;top:314px;" width="17" height="17" viewBox="0 0 17 17"><path d="M4 1.5 H15.5 V13" stroke="#a9c0e8" stroke-width="1" fill="none"/><rect x="1.5" y="3.5" width="12" height="12" fill="#f1f5fc" stroke="#95b3e3" stroke-width="1"/><path d="M1.5 7.5 H13.5 M1.5 11.5 H13.5 M5.5 3.5 V15.5 M9.5 3.5 V15.5" stroke="#95b3e3" stroke-width="1" fill="none"/></svg>
<div class="t" style="right:900px;top:339px;font-size:12px;color:#222;font-weight:normal;transform:scaleX(0.89);transform-origin:100% 0;">Data e hora inicial</div>
<div class="inp" style="left:375px;top:334px;width:81px;height:20px;background:#fff;border-color:#cfcfcf"></div>
<div class="t" style="left:379px;top:339px;font-size:11.5px;color:#222;font-weight:normal;">15/08/2024</div>
<svg class="a" style="left:459px;top:335px;" width="14" height="18" viewBox="0 0 14 18"><rect x="1" y="3" width="12.5" height="13.5" rx="1.5" stroke="#2a63c4" stroke-width="1.2" fill="#fff"/><path d="M1 6.5 H13.5 M4 1 V4.5 M10.5 1 V4.5" stroke="#2a63c4" stroke-width="1.3"/><text x="7.3" y="15.3" text-anchor="middle" font-family="Liberation Sans" font-size="9.5" fill="#2a63c4" style="letter-spacing:-0.3px">31</text></svg>
<div class="inp" style="left:474px;top:334px;width:27px;height:20px;background:#e4e4e4;border-color:#cfcfcf"></div>
<div class="t" style="left:478px;top:339px;font-size:11.5px;color:#555;font-weight:normal;transform:scaleX(0.9);transform-origin:0 0;">Qui</div>
<div class="inp" style="left:502px;top:334px;width:44px;height:20px;background:#fff;border-color:#cfcfcf"></div>
<div class="t" style="left:506px;top:339px;font-size:11.5px;color:#222;font-weight:normal;">16:02</div>
<div class="t" style="right:900px;top:361px;font-size:12px;color:#222;font-weight:normal;transform:scaleX(0.89);transform-origin:100% 0;">Final</div>
<div class="inp" style="left:375px;top:356px;width:81px;height:20px;background:#fff;border-color:#cfcfcf"></div>
<div class="t" style="left:379px;top:361px;font-size:11.5px;color:#222;font-weight:normal;">15/08/2024</div>
<svg class="a" style="left:459px;top:357px;" width="14" height="18" viewBox="0 0 14 18"><rect x="1" y="3" width="12.5" height="13.5" rx="1.5" stroke="#2a63c4" stroke-width="1.2" fill="#fff"/><path d="M1 6.5 H13.5 M4 1 V4.5 M10.5 1 V4.5" stroke="#2a63c4" stroke-width="1.3"/><text x="7.3" y="15.3" text-anchor="middle" font-family="Liberation Sans" font-size="9.5" fill="#2a63c4" style="letter-spacing:-0.3px">31</text></svg>
<div class="inp" style="left:474px;top:356px;width:27px;height:20px;background:#e4e4e4;border-color:#cfcfcf"></div>
<div class="t" style="left:478px;top:361px;font-size:11.5px;color:#555;font-weight:normal;transform:scaleX(0.9);transform-origin:0 0;">Qui</div>
<div class="inp" style="left:502px;top:356px;width:44px;height:20px;background:#fff;border-color:#cfcfcf"></div>
<div class="t" style="left:506px;top:361px;font-size:11.5px;color:#222;font-weight:normal;">16:02</div>
<div class="t" style="right:648px;top:339px;font-size:12px;color:#6b6b6b;font-weight:normal;transform:scaleX(0.89);transform-origin:100% 0;">Duração</div>
<div class="inp" style="left:627px;top:334px;width:90px;height:20px;background:#eaeaea;border-color:#cfcfcf"></div>
<div class="t" style="left:631px;top:339px;font-size:11.5px;color:#6a6a6a;font-weight:normal;">0000:00:00</div>
<div class="t" style="right:900px;top:383px;font-size:12px;color:#6b6b6b;font-weight:normal;transform:scaleX(0.89);transform-origin:100% 0;">Código do lote</div>
<div class="inp" style="left:375px;top:378px;width:63px;height:20px;background:#eaeaea;border-color:#cfcfcf"></div>
<svg class="a" style="left:440px;top:381px;" width="14" height="14" viewBox="0 0 14 14"><circle cx="5.8" cy="5.8" r="4.6" stroke="#3b78d8" stroke-width="1.3" fill="none"/><path d="M9.2 9.2 L13 13" stroke="#3b78d8" stroke-width="1.4"/></svg>
<div class="t" style="right:657px;top:383px;font-size:12px;color:#6b6b6b;font-weight:normal;transform:scaleX(0.89);transform-origin:100% 0;">Número do lote</div>
<div class="inp" style="left:618px;top:378px;width:225px;height:20px;background:#eaeaea;border-color:#cfcfcf"></div>
<div class="t" style="right:899px;top:406px;font-size:12px;color:#222;font-weight:normal;transform:scaleX(0.89);transform-origin:100% 0;">Encerrar a OP</div>
<div class="a" style="left:376px;top:404px;width:14px;height:14px;background:#fff;border:1px solid #9a9a9a;border-radius:2px"></div>
<div class="t" style="right:647px;top:406px;font-size:12px;color:#222;font-weight:normal;transform:scaleX(0.89);transform-origin:100% 0;">Encerrar talão/CC</div>
<div class="a" style="left:628px;top:404px;width:14px;height:14px;background:#fff;border:1px solid #9a9a9a;border-radius:2px"></div>
<svg class="a" style="left:768px;top:204px;" width="70" height="62" viewBox="0 0 70 62"><rect x="5.8" y="5.8" width="58" height="50" rx="5" stroke="#7a7a7a" stroke-width="5.7" fill="none"/><circle cx="21" cy="20.5" r="6" fill="#7a7a7a"/><path d="M8 51 L22 35.5 L28 42 L41 27.5 L62 51 Z" fill="#7a7a7a"/></svg>
<div class="t" style="left:757px;top:269px;font-size:12.5px;color:#7a7a7a;font-weight:bold;">Área reservada</div>
<div class="t" style="left:766px;top:284px;font-size:12.5px;color:#7a7a7a;font-weight:bold;">para imagem</div>
<div class="btn dis" style="left:951px;top:202px;width:117px;height:21px"></div>
<div class="t" style="left:997px;top:207px;font-size:11.5px;color:#8a8a8a;font-weight:normal;transform:scaleX(0.92);transform-origin:0 0;">Dese<u>n</u>ho</div>
<svg class="a" style="left:978px;top:204px;" width="18" height="17" viewBox="0 0 18 17"><rect x="1.5" y="1.5" width="15" height="14" rx="1.5" stroke="#9ab6e6" stroke-width="1.1" fill="none"/><circle cx="6" cy="6" r="1.5" stroke="#9ab6e6" fill="none"/><path d="M1.5 13 L7 8.5 L10 11 L16.5 6" stroke="#9ab6e6" stroke-width="1.1" fill="none"/></svg>
<div class="btn" style="left:951px;top:225px;width:117px;height:21px"></div>
<div class="t" style="left:999px;top:230px;font-size:11.5px;color:#222;font-weight:normal;transform:scaleX(0.92);transform-origin:0 0;"><u>I</u>nsumos</div>
<svg class="a" style="left:979px;top:227px;" width="18" height="17" viewBox="0 0 18 17"><path d="M9 1 L13 3 V7.5 L9 9.5 L5 7.5 V3 Z M5 3 L9 5 L13 3 M9 5 V9.5 M5 8 L9 10 V14.5 L5 16.5 L1 14.5 V10 Z M1 10 L5 12 L9 10 M5 12 V16.5 M13 8 L17 10 V14.5 L13 16.5 L9 14.5 V10 Z M9 10 L13 12 L17 10 M13 12 V16.5" stroke="#2a63c4" stroke-width="1.1" fill="none" stroke-linejoin="round" transform="translate(0,0) scale(1,0.95)"/></svg>
<div class="btn dis" style="left:951px;top:247px;width:117px;height:21px"></div>
<div class="t" style="left:984px;top:252px;font-size:11.5px;color:#8a8a8a;font-weight:normal;transform:scaleX(0.92);transform-origin:0 0;">Dados <u>R</u>efugo</div>
<svg class="a" style="left:966px;top:249px;" width="16" height="17" viewBox="0 0 16 17"><path d="M2 1.5 H9 L13 5.5 V16 H2 Z M9 1.5 V5.5 H13" stroke="#9ab6e6" stroke-width="1.1" fill="none"/><path d="M4.5 9 H10.5 M4.5 11.5 H10.5 M4.5 14 H10.5" stroke="#9ab6e6" stroke-width="1"/></svg>
<div class="btn" style="left:951px;top:269px;width:117px;height:21px"></div>
<div class="t" style="left:974px;top:274px;font-size:11.5px;color:#222;font-weight:normal;transform:scaleX(0.92);transform-origin:0 0;"><u>O</u>bs.Apontamento</div>
<svg class="a" style="left:957px;top:271px;" width="16" height="17" viewBox="0 0 16 17"><path d="M2 1.5 H9 L13 5.5 V16 H2 Z M9 1.5 V5.5 H13" stroke="#2a63c4" stroke-width="1.2" fill="none" stroke-linejoin="round"/></svg>
<div class="btn dis" style="left:951px;top:291px;width:117px;height:21px"></div>
<div class="t" style="left:989px;top:296px;font-size:11.5px;color:#8a8a8a;font-weight:normal;transform:scaleX(0.92);transform-origin:0 0;"><u>E</u>mbalagens</div>
<svg class="a" style="left:971px;top:293px;" width="18" height="17" viewBox="0 0 18 17"><rect x="2" y="2" width="14" height="13" rx="2" stroke="#9ab6e6" stroke-width="1.1" fill="none"/><path d="M2 6 H16 M9 2 V6" stroke="#9ab6e6" stroke-width="1.1"/></svg>
<div class="btn dis" style="left:951px;top:313px;width:117px;height:21px"></div>
<div class="t" style="left:991px;top:318px;font-size:11.5px;color:#8a8a8a;font-weight:normal;transform:scaleX(0.92);transform-origin:0 0;"><u>S</u>ubproduto</div>
<svg class="a" style="left:971px;top:315px;" width="18" height="17" viewBox="0 0 18 17"><path d="M4 1 V4 M1 4 L4 1 L7 4" stroke="#9ab6e6" stroke-width="1.1" fill="none"/><path d="M4 5 V11 H12" stroke="#9ab6e6" stroke-width="1.1" fill="none"/><rect x="12" y="8" width="5" height="6" stroke="#9ab6e6" stroke-width="1.1" fill="none"/></svg>
<div class="btn" style="left:951px;top:335px;width:117px;height:21px"></div>
<div class="t" style="left:979px;top:340px;font-size:11.5px;color:#222;font-weight:normal;transform:scaleX(0.92);transform-origin:0 0;">Dados Adi<u>c</u>ionais</div>
<svg class="a" style="left:959px;top:337px;" width="18" height="17" viewBox="0 0 18 17"><path d="M9 2.5 H3 A1.5 1.5 0 0 0 1.5 4 V14 A1.5 1.5 0 0 0 3 15.5 H13 A1.5 1.5 0 0 0 14.5 14 V8" stroke="#2a63c4" stroke-width="1.2" fill="none"/><path d="M6 11.5 L6.5 8 L13.5 1 L16 3.5 L9 10.5 Z" stroke="#2a63c4" stroke-width="1.2" fill="none" stroke-linejoin="round"/></svg>
<div class="a" style="left:203px;top:433px;width:864px;height:1px;background:#e2e2e2"></div>
<div class="t" style="left:285px;top:451px;font-size:12px;color:#333;font-weight:bold;">Quantidade total</div>
<div class="t" style="right:990px;top:472px;font-size:12px;color:#6b6b6b;font-weight:normal;transform:scaleX(0.89);transform-origin:100% 0;">OP</div>
<div class="inp" style="left:285px;top:467px;width:99px;height:20px;background:#eaeaea;border-color:#cfcfcf"></div>
<div class="t" style="right:889px;top:472px;font-size:11.5px;color:#6a6a6a;font-weight:normal;">15,000</div>
<div class="t" style="right:990px;top:494px;font-size:12px;color:#6b6b6b;font-weight:normal;transform:scaleX(0.89);transform-origin:100% 0;">Aprovada</div>
<div class="inp" style="left:285px;top:489px;width:99px;height:20px;background:#eaeaea;border-color:#cfcfcf"></div>
<div class="t" style="right:990px;top:516px;font-size:12px;color:#6b6b6b;font-weight:normal;transform:scaleX(0.89);transform-origin:100% 0;">Produzida</div>
<div class="inp" style="left:285px;top:511px;width:99px;height:20px;background:#eaeaea;border-color:#cfcfcf"></div>
<div class="t" style="right:990px;top:538px;font-size:12px;color:#6b6b6b;font-weight:normal;transform:scaleX(0.89);transform-origin:100% 0;">Refugada</div>
<div class="inp" style="left:285px;top:533px;width:99px;height:20px;background:#eaeaea;border-color:#cfcfcf"></div>
<div class="a" style="left:402px;top:444px;width:657px;height:85px;border:1px solid #c2c2c2;background:#fff"></div>
<div class="a" style="left:403px;top:445px;width:640px;height:17px;background:#f2f2f2"></div>
<div class="t" style="left:405px;top:448px;font-size:11px;color:#222;font-weight:normal;">Centro custo</div>
<div class="a" style="left:479px;top:445px;width:1px;height:17px;background:#d6d6d6"></div>
<div class="a" style="left:563px;top:445px;width:1px;height:17px;background:#d6d6d6"></div>
<div class="a" style="left:647px;top:445px;width:1px;height:17px;background:#d6d6d6"></div>
<div class="a" style="left:685px;top:445px;width:1px;height:17px;background:#d6d6d6"></div>
<div class="a" style="left:723px;top:445px;width:1px;height:17px;background:#d6d6d6"></div>
<div class="t" style="left:491px;top:448px;font-size:11px;color:#222;font-weight:normal;">Qtd.Aprovada</div>
<div class="t" style="left:576px;top:448px;font-size:11px;color:#222;font-weight:normal;">Qtd.Refugada</div>
<div class="t" style="left:649px;top:448px;font-size:11px;color:#222;font-weight:normal;">Data</div>
<div class="t" style="left:687px;top:448px;font-size:11px;color:#222;font-weight:normal;">Hora</div>
<div class="a" style="left:403px;top:462px;width:76px;height:19px;background:#fff;border:2px solid #d9d9d9;border-left:1px solid #d9d9d9"></div>
<div class="t" style="left:414px;top:465px;font-size:11.5px;color:#222;font-weight:normal;transform:scaleX(0.88);transform-origin:0 0;">2 ALMOX</div>
<div class="a" style="left:403px;top:481px;width:76px;height:19px;background:#fff;border:2px solid #d9d9d9;border-left:1px solid #d9d9d9"></div>
<div class="t" style="left:414px;top:484px;font-size:11.5px;color:#222;font-weight:normal;transform:scaleX(0.88);transform-origin:0 0;">4 CORTE</div>
<div class="a" style="left:403px;top:500px;width:76px;height:19px;background:#fff;border:2px solid #d9d9d9;border-left:1px solid #d9d9d9"></div>
<div class="t" style="left:411px;top:503px;font-size:11.5px;color:#222;font-weight:normal;transform:scaleX(0.88);transform-origin:0 0;">36 COST</div>
<div class="a" style="left:480px;top:463px;width:83px;height:17px;background:#484848"></div>
<div class="a" style="left:564px;top:463px;width:83px;height:17px;background:#7f7f7f"></div>
<div class="a" style="left:648px;top:463px;width:37px;height:17px;background:#7f7f7f"></div>
<div class="a" style="left:686px;top:463px;width:37px;height:17px;background:#7f7f7f"></div>
<div class="a" style="left:480px;top:481px;width:243px;height:19px;background:#fff"></div>
<div class="a" style="left:563px;top:481px;width:1px;height:32px;background:#ececec"></div>
<div class="a" style="left:647px;top:481px;width:1px;height:32px;background:#ececec"></div>
<div class="a" style="left:685px;top:481px;width:1px;height:32px;background:#ececec"></div>
<div class="a" style="left:723px;top:481px;width:1px;height:32px;background:#ececec"></div>
<div class="a" style="left:480px;top:500px;width:243px;height:13px;background:#f0f0f0"></div>
<div class="a" style="left:403px;top:513px;width:640px;height:15px;background:#f0f0f0"></div>
<svg class="a" style="left:483px;top:515px;" width="10" height="12" viewBox="0 0 10 12"><path d="M7 1 L2 6 L7 11" stroke="#555" stroke-width="1.1" fill="none"/></svg>
<svg class="a" style="left:1030px;top:515px;" width="10" height="12" viewBox="0 0 10 12"><path d="M3 1 L8 6 L3 11" stroke="#555" stroke-width="1.1" fill="none"/></svg>
<div class="a" style="left:1043px;top:445px;width:15px;height:83px;background:#f0f0f0"></div>
<div class="a" style="left:1043px;top:445px;width:15px;height:17px;background:#fff"></div>
<svg class="a" style="left:1045px;top:447px;" width="10" height="14" viewBox="0 0 10 14"><circle cx="5" cy="2" r=".9" fill="#2a63c4"/><circle cx="5" cy="6.5" r=".9" fill="#2a63c4"/><circle cx="5" cy="11" r=".9" fill="#2a63c4"/></svg>
<svg class="a" style="left:1045px;top:467px;" width="11" height="8" viewBox="0 0 11 8"><path d="M1 6.5 L5.5 2 L10 6.5" stroke="#555" stroke-width="1.1" fill="none"/></svg>
<div class="a" style="left:1044px;top:479px;width:14px;height:8px;background:#d6d6d6;border-radius:2px"></div>
<svg class="a" style="left:1045px;top:500px;" width="11" height="8" viewBox="0 0 11 8"><path d="M1 1.5 L5.5 6 L10 1.5" stroke="#555" stroke-width="1.1" fill="none"/></svg>
<svg class="a" style="left:401px;top:528px;" width="302" height="27" viewBox="0 0 302 27"><path d="M1 0 V25.5 H282 L300.5 0" stroke="#c2c2c2" stroke-width="1" fill="#fcfcfc"/></svg>
<svg class="a" style="left:406px;top:532px;" width="17" height="17" viewBox="0 0 17 17"><path d="M1.5 2 H16 L10.5 8.5 V15 L7.5 13 V8.5 Z" stroke="#2a63c4" stroke-width="1.2" fill="none" stroke-linejoin="round"/></svg>
<div class="a" style="left:431px;top:532px;width:230px;height:19px;background:#fff;border:1px solid #cfcfcf;border-radius:3px"></div>
<div class="t" style="left:436px;top:535px;font-size:11px;color:#777;font-weight:normal;font-style:italic">Digite aqui para buscar...</div>
<svg class="a" style="left:669px;top:536px;" width="10" height="10" viewBox="0 0 10 10"><path d="M1 1 L9 9 M9 1 L1 9" stroke="#888" stroke-width="1.1"/></svg>
<div class="a" style="left:203px;top:566px;width:864px;height:1px;background:#e2e2e2"></div>
<div class="btn" style="left:204px;top:577px;width:99px;height:39px;border-color:#d0d0d0"></div>
<svg class="a" style="left:210px;top:588px;" width="20" height="17" viewBox="0 0 20 17"><path d="M2 15 V3 L5 1 V6 L8 3 V6 H10" stroke="#3b78d8" stroke-width="1.1" fill="none" stroke-linejoin="round"/><path d="M2 15 H9" stroke="#3b78d8" stroke-width="1.1"/><circle cx="13" cy="10" r="3.5" stroke="#3b78d8" stroke-width="1.1" fill="none"/><path d="M15.5 12.5 L18 15" stroke="#3b78d8" stroke-width="1.2"/></svg>
<div class="t" style="left:229px;top:590px;font-size:11.5px;color:#222;font-weight:normal;transform:scaleX(0.88);transform-origin:0 0;"><u>P</u>osição da OP</div>
<div class="btn" style="left:312px;top:577px;width:99px;height:39px;border-color:#d0d0d0"></div>
<svg class="a" style="left:316px;top:587px;" width="18" height="18" viewBox="0 0 18 18"><circle cx="9" cy="9" r="7.5" stroke="#3b78d8" stroke-width="1.3" fill="none"/><path d="M7 5.5 L12 9 L7 12.5 Z" stroke="#3b78d8" stroke-width="1.1" fill="#9ab6e6"/></svg>
<div class="t" style="left:336px;top:590px;font-size:11.5px;color:#222;font-weight:normal;transform:scaleX(0.93);transform-origin:0 0;">Apon<u>t</u>amentos</div>
<div class="btn" style="left:861px;top:576px;width:99px;height:40px;border-color:#d0d0d0"></div>
<svg class="a" style="left:879px;top:587px;" width="16" height="16" viewBox="0 0 16 16"><path d="M1 1 L15 15 M15 1 L1 15" stroke="#3b78d8" stroke-width="1.3"/></svg>
<div class="t" style="left:898px;top:590px;font-size:11.5px;color:#222;font-weight:normal;transform:scaleX(0.9);transform-origin:0 0;">Cancelar</div>
<div class="a" style="left:969px;top:576px;width:99px;height:40px;background:#1a6ad9;border:1px solid #1560cc;border-radius:3px"></div>
<div class="t" style="left:988px;top:583px;font-size:11.5px;color:#fff;font-weight:normal;transform:scaleX(0.92);transform-origin:0 0;"><u>A</u>vançar</div>
<div class="t" style="left:978px;top:596px;font-size:11.5px;color:#fff;font-weight:normal;transform:scaleX(0.94);transform-origin:0 0;">(page down)</div>
<svg class="a" style="left:1045px;top:589px;" width="8" height="14" viewBox="0 0 8 14"><path d="M1 1 L7 7 L1 13" stroke="#fff" stroke-width="1.2" fill="none"/></svg>
</body></html>
